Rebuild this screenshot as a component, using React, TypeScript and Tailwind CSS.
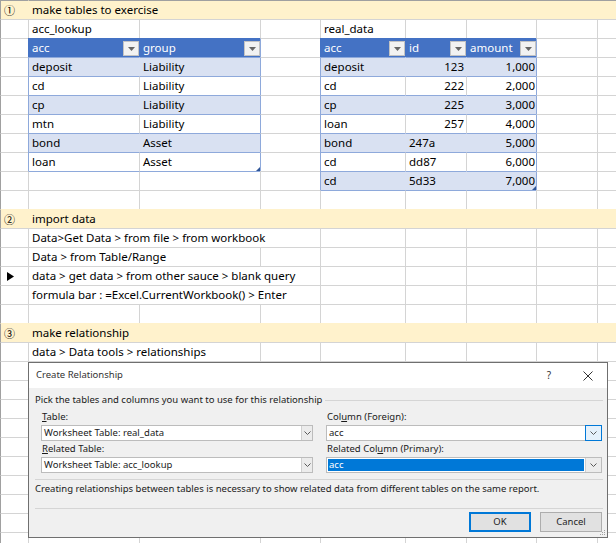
import React from "react";
import { clsx, type ClassValue } from "clsx";
import { twMerge } from "tailwind-merge";

const cn = (...inputs: ClassValue[]) => twMerge(clsx(inputs));

// column widths of the sheet: A..I
const GRID = "grid grid-cols-[28px_111px_121px_60px_85px_61px_70px_61px_1fr]";

const BASE =
  "relative h-[19px] border-l border-t border-l-[#d4d4d4] border-t-[#d4d4d4] pl-[3px] pr-[2px] leading-[18px] whitespace-nowrap";
const COL_A = "border-l-[#a0a0a0] pl-[3px] flex items-center";
const YELLOW = "bg-[#fff2cc] border-l-[#fff2cc] border-t-[#fff2cc]";
const HEAD = "bg-[#4472c4] text-white border-l-[#4472c4] border-t-[#4472c4]";
const BAND = "bg-[#d9e1f2]";

type CellProps = { span?: 2 | 3 | 8; className?: string; children?: React.ReactNode };

const Cell = ({ span, className, children }: CellProps) => (
  <div
    className={cn(
      BASE,
      span === 2 && "col-span-2",
      span === 3 && "col-span-3",
      span === 8 && "col-span-8",
      className
    )}
  >
    {children}
  </div>
);

const Row = ({ children }: { children: React.ReactNode }) => <div className={GRID}>{children}</div>;

const Circled = ({ children }: { children: React.ReactNode }) => (
  <span className="font-['Noto_Sans_CJK_KR',sans-serif] text-[11px] leading-none">{children}</span>
);

const Filter = () => (
  <span className="absolute right-0 top-[2px] flex h-[15px] w-[16px] items-center justify-center border border-[#c3c3c3] bg-[#f2f2f2]">
    <svg width="7" height="4" viewBox="0 0 7 4">
      <polygon points="0,0 7,0 3.5,4" fill="#666666" />
    </svg>
  </span>
);

const Handle = () => (
  <svg className="absolute bottom-0 right-0" width="4" height="4" viewBox="0 0 4 4">
    <polygon points="4,0 4,4 0,4" fill="#2f5597" />
  </svg>
);

const lookup = [
  ["deposit", "Liability"],
  ["cd", "Liability"],
  ["cp", "Liability"],
  ["mtn", "Liability"],
  ["bond", "Asset"],
  ["loan", "Asset"],
];

const realData = [
  ["deposit", "123", "1,000"],
  ["cd", "222", "2,000"],
  ["cp", "225", "3,000"],
  ["loan", "257", "4,000"],
  ["bond", "247a", "5,000"],
  ["cd", "dd87", "6,000"],
  ["cd", "5d33", "7,000"],
];

const BlankRow = () => (
  <Row>
    <Cell className={COL_A} />
    <Cell />
    <Cell />
    <Cell />
    <Cell />
    <Cell />
    <Cell />
    <Cell />
    <Cell />
  </Row>
);

const TextRow = ({ span, text, mark }: { span: 2 | 3; text: string; mark?: boolean }) => (
  <Row>
    <Cell className={cn(COL_A, "pl-[6px]")}>
      {mark && (
        <svg width="7" height="9" viewBox="0 0 7 9">
          <polygon points="0,0 7,4.5 0,9" fill="#000" />
        </svg>
      )}
    </Cell>
    <Cell span={span}>{text}</Cell>
    {span === 2 && <Cell />}
    <Cell />
    <Cell />
    <Cell />
    <Cell />
    <Cell />
  </Row>
);

const YellowRow = ({ n, text, top }: { n: string; text: string; top?: boolean }) => (
  <Row>
    <Cell className={cn(COL_A, YELLOW, "border-l-[#a0a0a0]", top && "border-t-[#a0a0a0]")}>
      <Circled>{n}</Circled>
    </Cell>
    <Cell span={8} className={cn(YELLOW, top && "border-t-[#a0a0a0]")}>
      {text}
    </Cell>
  </Row>
);

const Sheet = () => (
  <div className="font-['Noto_Sans',sans-serif] text-[11.5px] text-black">
    <YellowRow n="①" text="make tables to exercise" top />
    <Row>
      <Cell className={COL_A} />
      <Cell>acc_lookup</Cell>
      <Cell />
      <Cell />
      <Cell>real_data</Cell>
      <Cell />
      <Cell />
      <Cell />
      <Cell />
    </Row>
    <Row>
      <Cell className={COL_A} />
      <Cell className={HEAD}>
        acc
        <Filter />
      </Cell>
      <Cell className={HEAD}>
        group
        <Filter />
      </Cell>
      <Cell className="border-l-[#8ea9db]" />
      <Cell className={HEAD}>
        acc
        <Filter />
      </Cell>
      <Cell className={HEAD}>
        id
        <Filter />
      </Cell>
      <Cell className={HEAD}>
        amount
        <Filter />
      </Cell>
      <Cell className="border-l-[#8ea9db]" />
      <Cell />
    </Row>
    {realData.map((r, i) => {
      const band = i % 2 === 0;
      const lk = lookup[i];
      const innerL = band ? "border-l-[#d9e1f2]" : "border-l-[#d4d4d4]";
      const numeric = /^\d+$/.test(r[1]);
      return (
        <Row key={i}>
          <Cell className={COL_A} />
          {lk ? (
            <>
              <Cell className={cn("border-l-[#8ea9db] border-t-[#8ea9db]", band && BAND)}>{lk[0]}</Cell>
              <Cell className={cn(innerL, "border-t-[#8ea9db]", band && BAND)}>
                {lk[1]}
                {i === lookup.length - 1 && <Handle />}
              </Cell>
              <Cell className="border-l-[#8ea9db]" />
            </>
          ) : (
            <>
              <Cell className="border-t-[#8ea9db]" />
              <Cell className="border-t-[#8ea9db]" />
              <Cell />
            </>
          )}
          <Cell className={cn("border-l-[#8ea9db] border-t-[#8ea9db]", band && BAND)}>{r[0]}</Cell>
          <Cell className={cn(innerL, "border-t-[#8ea9db]", band && BAND, numeric && "text-right")}>
            {r[1]}
          </Cell>
          <Cell className={cn(innerL, "border-t-[#8ea9db] text-right pr-[1px]", band && BAND)}>
            {r[2]}
            {i === realData.length - 1 && <Handle />}
          </Cell>
          <Cell className="border-l-[#8ea9db]" />
          <Cell />
        </Row>
      );
    })}
    <Row>
      <Cell className={COL_A} />
      <Cell />
      <Cell />
      <Cell />
      <Cell className="border-t-[#8ea9db]" />
      <Cell className="border-t-[#8ea9db]" />
      <Cell className="border-t-[#8ea9db]" />
      <Cell />
      <Cell />
    </Row>
    <YellowRow n="②" text="import data" />
    <TextRow span={3} text="Data>Get Data > from file > from workbook" />
    <TextRow span={2} text="Data > from Table/Range" />
    <TextRow span={3} text="data > get data > from other sauce > blank query" mark />
    <TextRow span={3} text="formula bar : =Excel.CurrentWorkbook() > Enter" />
    <BlankRow />
    <YellowRow n="③" text="make relationship" />
    <TextRow span={2} text="data > Data tools > relationships" />
    {Array.from({ length: 10 }).map((_, i) => (
      <BlankRow key={`b${i}`} />
    ))}
  </div>
);

const Chevron = () => (
  <svg width="7" height="4" viewBox="0 0 7 4">
    <polyline points="0.5,0.5 3.5,3.5 6.5,0.5" fill="none" stroke="#5a5a5a" strokeWidth="1" />
  </svg>
);

const Select = ({
  value,
  selected,
  focused,
  narrow,
}: {
  value: string;
  selected?: boolean;
  focused?: boolean;
  narrow?: boolean;
}) => (
  <div className="flex h-[16px] border border-[#bcbcbc] bg-white">
    <div
      className={cn(
        "flex flex-1 items-center pl-[2px] leading-none",
        selected && "m-[1px] bg-[#0078d7] pl-[1px] text-white"
      )}
    >
      {value}
    </div>
    <div
      className={cn(
        "flex items-center justify-center",
        narrow ? "w-[11px]" : "w-[16px]",
        focused ? "-m-[1px] w-[17px] border border-[#0078d7] bg-[#e5f1fb]" : "border-l border-[#d0d0d0] bg-[#ececec]"
      )}
    >
      <Chevron />
    </div>
  </div>
);

const Label = ({ pre, u, post }: { pre: string; u: string; post: string }) => (
  <div className="mt-[1px] h-[14px] pl-[1px] leading-[14px]">
    {pre}
    <span className="underline underline-offset-1">{u}</span>
    {post}
  </div>
);

const Dialog = () => (
  <div className="absolute left-[28px] top-[362px] flex h-[176px] w-[580px] flex-col border border-[#6f6f6f] bg-[#f0f0f0] font-['Noto_Sans',sans-serif] text-[9.5px] text-[#1a1a1a]">
    <div className="flex h-[25px] shrink-0 items-center bg-white pl-[7px] pr-[14px]">
      <span className="text-[9.5px] text-[#333]">Create Relationship</span>
      <span className="ml-auto text-[10px] text-[#333]">?</span>
      <svg className="ml-[32px]" width="10" height="10" viewBox="0 0 10 10">
        <path d="M0.5 0.5 L9.5 9.5 M9.5 0.5 L0.5 9.5" stroke="#333" strokeWidth="1" />
      </svg>
    </div>
    <div className="relative flex flex-1 flex-col pl-[6px] pr-[4px]">
      <div className="mt-[5px] flex h-[14px] items-center">
        <span className="leading-[14px]">Pick the tables and columns you want to use for this relationship</span>
        <span className="ml-[3px] h-0 flex-1 border-t border-[#d5d5d5]" />
      </div>
      <div className="ml-[6px] grid grid-cols-[272px_276px] gap-x-[13px]">
        <div className="flex flex-col">
          <div className="mt-[2px]">
            <Label pre="" u="T" post="able:" />
          </div>
          <div className="mt-[1px]">
            <Select value="Worksheet Table: real_data" narrow />
          </div>
          <Label pre="" u="R" post="elated Table:" />
          <div className="mt-[1px]">
            <Select value="Worksheet Table: acc_lookup" narrow />
          </div>
        </div>
        <div className="flex flex-col">
          <div className="mt-[2px]">
            <Label pre="Col" u="u" post="mn (Foreign):" />
          </div>
          <div className="mt-[1px]">
            <Select value="acc" focused />
          </div>
          <Label pre="Related Col" u="u" post="mn (Primary):" />
          <div className="mt-[1px]">
            <Select value="acc" selected />
          </div>
        </div>
      </div>
      <div className="mt-[6px] border-t border-[#d5d5d5]" />
      <div className="mt-[2px] h-[14px] leading-[14px]">
        Creating relationships between tables is necessary to show related data from different tables on the same report.
      </div>
      <div className="mt-[12px] border-t border-[#d5d5d5]" />
      <div className="mr-[1px] mt-[3px] flex justify-end gap-[9px]">
        <button className="flex h-[20px] w-[62px] items-center justify-center border border-[#0078d7] bg-[#e1e1e1] text-[9.5px] text-[#1e1e1e] shadow-[inset_0_0_0_1px_#0078d7]">
          OK
        </button>
        <button className="flex h-[20px] w-[62px] items-center justify-center border border-[#adadad] bg-[#e1e1e1] text-[9.5px] text-[#1e1e1e]">
          Cancel
        </button>
      </div>
      <svg className="absolute bottom-[1px] right-[1px]" width="7" height="7" viewBox="0 0 7 7">
        <rect x="5" y="1" width="1" height="1" fill="#a0a0a0" />
        <rect x="3" y="3" width="1" height="1" fill="#a0a0a0" />
        <rect x="5" y="3" width="1" height="1" fill="#a0a0a0" />
        <rect x="1" y="5" width="1" height="1" fill="#a0a0a0" />
        <rect x="3" y="5" width="1" height="1" fill="#a0a0a0" />
        <rect x="5" y="5" width="1" height="1" fill="#a0a0a0" />
      </svg>
    </div>
  </div>
);

export default function App() {
  return (
    <div className="relative h-[543px] w-[616px] overflow-hidden bg-white">
      <Sheet />
      <Dialog />
    </div>
  );
}
